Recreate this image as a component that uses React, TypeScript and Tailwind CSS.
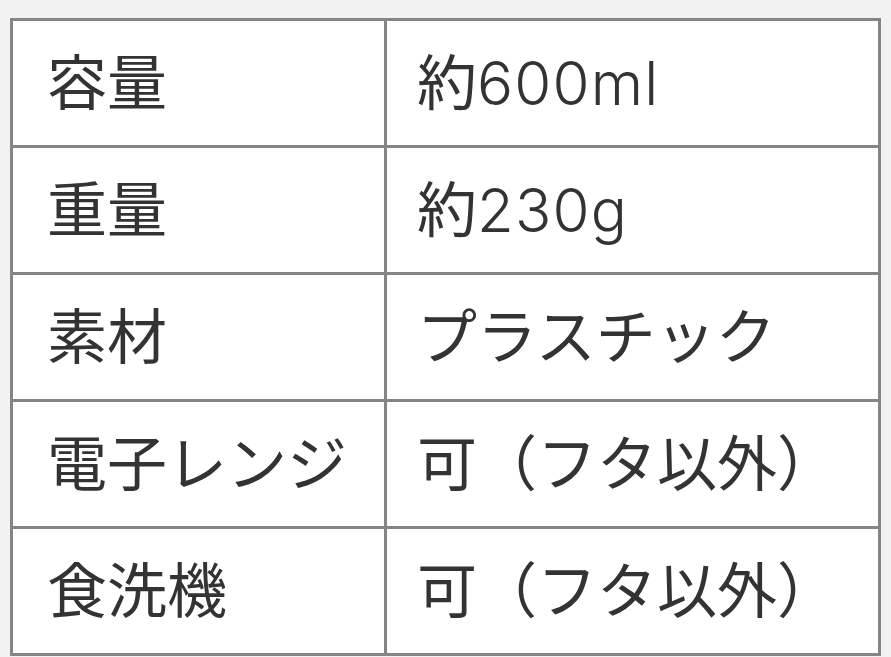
const rows: [string, React.ReactNode][] = [
  ['容量', <>約<span className="font-light tracking-[0.02em]">600ml</span></>],
  ['重量', <>約<span className="font-light tracking-[0.02em]">230g</span></>],
  ['素材', 'プラスチック'],
  ['電子レンジ', '可（フタ以外）'],
  ['食洗機', '可（フタ以外）'],
];

export default function App() {
  return (
    <div className="min-h-screen bg-[#f2f2f2] pt-[18px] pl-[10px] pr-[10px]">
      <table
        className="w-[871px] border-collapse bg-white text-[#333] text-[60px] leading-none"
        style={{ fontFamily: 'Inter, "Noto Sans CJK JP", sans-serif' }}
      >
        <tbody>
          {rows.map(([label, value]) => (
            <tr key={label} className="h-[127px]">
              <td className="w-[374px] border-[3px] border-[#858585] pl-[34px] align-middle whitespace-nowrap">
                {label}
              </td>
              <td className="border-[3px] border-[#858585] pl-[30px] align-middle whitespace-nowrap">
                {value}
              </td>
            </tr>
          ))}
        </tbody>
      </table>
    </div>
  );
}
